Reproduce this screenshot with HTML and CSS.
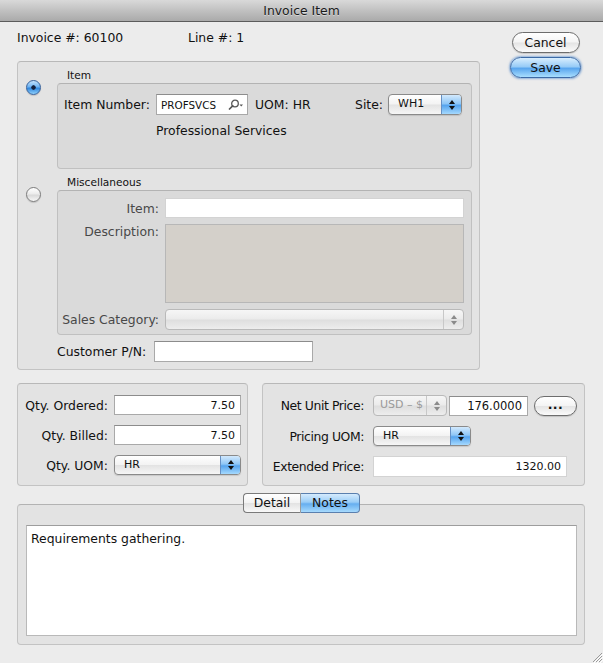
FILE: index.html
```html
<!DOCTYPE html>
<html>
<head>
<meta charset="utf-8">
<title>Invoice Item</title>
<link rel="stylesheet" href="styles.css">
</head>
<body>
<div class="window">
  <div class="titlebar">Invoice Item</div>
  <div class="content">
    <div class="top">
      <div class="left">
        <div class="header">
          <span class="inv">Invoice #: 60100</span>
          <span class="lineno">Line #: 1</span>
        </div>
        <div class="mainbox">
          <div class="section">
            <span class="radio on"></span>
            <div class="group">
              <div class="gtitle">Item</div>
              <div class="gbox itembox">
                <div class="itemrow">
                  <span class="inlbl">Item Number:</span>
                  <span class="search">
                    <span class="stext">PROFSVCS</span>
                    <svg class="sicon" width="16" height="11" viewBox="0 0 16 11">
                      <circle cx="7" cy="4.5" r="3.3" fill="none" stroke="#555" stroke-width="1.3"/>
                      <line x1="4.7" y1="6.9" x2="1.5" y2="10" stroke="#555" stroke-width="1.7" stroke-linecap="round"/>
                      <path d="M11.5 5.5 L15 5.5 L13.25 7.5 Z" fill="#555"/>
                    </svg>
                  </span>
                  <span class="uom">UOM: HR</span>
                  <span class="sitelbl">Site:</span>
                  <span class="popup site"><span class="val">WH1</span><span class="pbtn-arrows"></span></span>
                </div>
                <div class="itemdesc">Professional Services</div>
              </div>
            </div>
          </div>
          <div class="section misc">
            <span class="radio off"></span>
            <div class="group">
              <div class="gtitle">Miscellaneous</div>
              <div class="gbox miscbox">
                <span class="mlbl">Item:</span>
                <span class="field light"></span>
                <span class="mlbl mtop">Description:</span>
                <span class="descarea"></span>
                <span class="mlbl">Sales Category:</span>
                <span class="popup disabled wide"><span class="val"></span><span class="dis-arrows"></span></span>
              </div>
            </div>
          </div>
          <div class="custrow">
            <span class="custlbl">Customer P/N:</span>
            <span class="field cust"></span>
          </div>
        </div>
      </div>
      <div class="buttons">
        <span class="pill cancel">Cancel</span>
        <span class="pill save">Save</span>
      </div>
    </div>

    <div class="lower">
      <div class="box qty">
        <span class="lbl">Qty. Ordered:</span>
        <span class="field num">7.50</span>
        <span class="lbl">Qty. Billed:</span>
        <span class="field num">7.50</span>
        <span class="lbl">Qty. UOM:</span>
        <span class="popup"><span class="val">HR</span><span class="pbtn-arrows"></span></span>
      </div>
      <div class="box price">
        <span class="lbl">Net Unit Price:</span>
        <span class="netrow">
          <span class="popup disabled usd"><span class="val">USD – $</span><span class="dis-arrows"></span></span>
          <span class="field num unit">176.0000</span>
          <span class="pill dots">...</span>
        </span>
        <span class="lbl">Pricing UOM:</span>
        <span class="popup puom"><span class="val">HR</span><span class="pbtn-arrows"></span></span>
        <span class="lbl">Extended Price:</span>
        <span class="field num light ext">1320.00</span>
      </div>
    </div>

    <div class="tabarea">
      <div class="tabs">
        <span class="tab">Detail</span>
        <span class="tab sel">Notes</span>
      </div>
      <div class="tabbox">
        <div class="notes">Requirements gathering.</div>
      </div>
    </div>
  </div>
  <svg class="grip" width="13" height="13" viewBox="0 0 13 13">
    <line x1="12" y1="3" x2="3" y2="12" stroke="#9a9a9a" stroke-width="1"/>
    <line x1="12" y1="6" x2="6" y2="12" stroke="#9a9a9a" stroke-width="1"/>
    <line x1="12" y1="9" x2="9" y2="12" stroke="#9a9a9a" stroke-width="1"/>
    <line x1="13" y1="4" x2="4" y2="13" stroke="#ffffff" stroke-width="1"/>
    <line x1="13" y1="7" x2="7" y2="13" stroke="#ffffff" stroke-width="1"/>
    <line x1="13" y1="10" x2="10" y2="13" stroke="#ffffff" stroke-width="1"/>
  </svg>
</div>
</body>
</html>
```

FILE: styles.css
```css
* { box-sizing: border-box; }
html, body { margin: 0; padding: 0; }
body {
  width: 603px;
  height: 663px;
  background: #ececec;
  font-family: "DejaVu Sans", "Noto Sans", sans-serif;
  font-size: 12.4px;
  color: #111;
  overflow: hidden;
}
.window {
  position: relative;
  width: 603px;
  height: 663px;
  background: #ececec;
}
.titlebar {
  height: 22px;
  line-height: 21px;
  text-align: center;
  background: linear-gradient(#d9d9d9, #bcbcbc 60%, #aaaaaa);
  border-bottom: 1px solid #5c5c5c;
  color: #1a1a1a;
  text-shadow: 0 1px 0 rgba(255,255,255,0.45);
}
.content {
  padding: 0 18px 0 17px;
}
.top {
  display: flex;
}
.left {
  width: 463px;
}
.header {
  padding-top: 9px;
  height: 23px;
  line-height: 14px;
  margin-bottom: 16px;
  display: flex;
}
.inv { width: 171px; }

.mainbox {
  background: #e3e3e3;
  border: 1px solid #c3c3c3;
  border-top-color: #b8b8b8;
  border-radius: 4px;
  padding: 6px 7px 7px 8px;
}
.section {
  display: flex;
  align-items: flex-start;
}
.section.misc { margin-top: 6px; }
.radio {
  width: 15px;
  height: 15px;
  border-radius: 50%;
  margin-top: 12px;
  margin-right: 16px;
  flex: none;
  box-shadow: 0 1px 1px rgba(0,0,0,0.15);
}
.radio.on {
  border: 1px solid #35609b;
  background:
    radial-gradient(circle, #14213d 0 1.9px, transparent 2.5px),
    linear-gradient(#c3e2fc, #6db2f1 45%, #2f86dd 55%, #8fd0fb);
}
.radio.off {
  border: 1px solid #7c7c7c;
  background: linear-gradient(#ffffff, #ececec 45%, #d9d9d9 55%, #f7f7f7);
}
.group { flex: 1; }
.gtitle {
  font-size: 10.6px;
  line-height: 14px;
  height: 14px;
  padding-left: 10px;
  margin-bottom: 1px;
}
.gbox {
  background: #dadada;
  border: 1px solid #c0c0c0;
  border-top-color: #b3b3b3;
  border-radius: 4px;
}
.itembox {
  height: 86px;
  padding: 10px 9px 0 6px;
}
.itemrow {
  display: flex;
  align-items: center;
  height: 21px;
}
.inlbl { width: 92px; white-space: nowrap; }
.search {
  width: 92px;
  height: 21px;
  display: flex;
  align-items: center;
  background: #fff;
  border: 1px solid #a8a8a8;
  border-top-color: #8d8d8d;
  padding-left: 4px;
  font-size: 10.4px;
}
.stext { flex: 1; }
.sicon { margin-right: 3px; }
.uom { margin-left: 7px; }
.sitelbl { margin-left: auto; margin-right: 5px; }
.itemdesc {
  margin-top: 9px;
  margin-left: 92px;
  line-height: 13px;
}

.popup {
  display: flex;
  align-items: stretch;
  height: 20px;
  border: 1px solid #8a8a8a;
  border-radius: 4px;
  background: linear-gradient(#ffffff, #f3f3f3 48%, #e3e3e3 52%, #f6f6f6);
  box-shadow: 0 1px 1px rgba(0,0,0,0.12);
  font-size: 11px;
  overflow: hidden;
}
.popup .val {
  flex: 1;
  padding-left: 9px;
  line-height: 18px;
  white-space: nowrap;
}
.pbtn-arrows {
  width: 20px;
  background: linear-gradient(#d2e9fd, #8ec6f6 45%, #56a4ee 55%, #a5d9fe);
  border-left: 1px solid #6690c4;
  display: flex;
  flex-direction: column;
  align-items: center;
  justify-content: center;
  gap: 2px;
}
.pbtn-arrows::before {
  content: "";
  border-left: 3px solid transparent;
  border-right: 3px solid transparent;
  border-bottom: 4px solid #111;
}
.pbtn-arrows::after {
  content: "";
  border-left: 3px solid transparent;
  border-right: 3px solid transparent;
  border-top: 4px solid #111;
}
.popup.site { width: 74px; height: 21px; }
.popup.disabled {
  border-color: #b9b9b9;
  background: linear-gradient(#f6f6f6, #ebebeb 48%, #dedede 52%, #ededed);
  box-shadow: none;
  color: #9a9a9a;
}
.dis-arrows {
  width: 20px;
  border-left: 1px solid #c8c8c8;
  display: flex;
  flex-direction: column;
  align-items: center;
  justify-content: center;
  gap: 2px;
}
.dis-arrows::before {
  content: "";
  border-left: 3px solid transparent;
  border-right: 3px solid transparent;
  border-bottom: 4px solid #8a8a8a;
}
.dis-arrows::after {
  content: "";
  border-left: 3px solid transparent;
  border-right: 3px solid transparent;
  border-top: 4px solid #8a8a8a;
}
.popup.wide { height: 21px; }

.miscbox {
  display: grid;
  grid-template-columns: 101px 299px;
  column-gap: 6px;
  grid-template-rows: 20px 79px 21px;
  row-gap: 6px;
  padding: 7px 7px 4px 0;
  align-items: center;
}
.miscbox .descarea { margin-bottom: 1px; }
.mlbl {
  justify-self: end;
  text-align: right;
  color: #484848;
  white-space: nowrap;
}
.mlbl.mtop { align-self: start; line-height: 16px; }

.field {
  display: flex;
  align-items: center;
  height: 20px;
  background: #fff;
  border: 1px solid #a9a9a9;
  border-top-color: #8c8c8c;
  font-size: 11px;
  padding: 0 5px;
}
.field.light {
  border-color: #d3d3d3;
}
.field.num { justify-content: flex-end; }
.descarea {
  display: block;
  height: 79px;
  background: #d4d0ca;
  border: 1px solid #b7b7b7;
}
.custrow {
  display: flex;
  align-items: center;
  margin-top: 6px;
  margin-left: 31px;
}
.custlbl { width: 97px; white-space: nowrap; }
.field.cust { width: 159px; height: 21px; }

.buttons {
  margin-left: 30px;
  padding-top: 10px;
  width: 71px;
  display: flex;
  flex-direction: column;
  align-items: center;
  gap: 4px;
}
.pill {
  display: block;
  height: 21px;
  border-radius: 11px;
  border: 1px solid #6d6d6d;
  background: linear-gradient(#ffffff, #f4f4f4 48%, #e4e4e4 52%, #fbfbfb);
  text-align: center;
  line-height: 19px;
  box-shadow: 0 1px 1px rgba(0,0,0,0.15);
}
.pill.cancel { width: 68px; }
.pill.save {
  width: 71px;
  border-color: #3c6aa6;
  background: linear-gradient(#d9eefe, #98ccf7 45%, #5aa6ee 55%, #a8defe);
  box-shadow: 0 0 2px 1px rgba(70,130,200,0.55);
}

.lower {
  display: flex;
  gap: 14px;
  margin-top: 13px;
}
.box {
  background: #e3e3e3;
  border: 1px solid #c3c3c3;
  border-top-color: #b8b8b8;
  border-radius: 4px;
  display: grid;
  align-items: center;
}
.lbl {
  text-align: right;
  white-space: nowrap;
}
.box.qty {
  width: 231px;
  height: 103px;
  grid-template-columns: 90px 127px;
  grid-template-rows: 20px 20px 20px;
  column-gap: 6px;
  row-gap: 10px;
  padding: 11px 6px 10px 0;
}
.box.price {
  width: 323px;
  height: 103px;
  grid-template-columns: 95px 204px;
  grid-template-rows: 21px 20px 21px;
  column-gap: 9px;
  row-gap: 10px;
  padding: 11px 7px 9px 6px;
}
.price .lbl { letter-spacing: -0.4px; justify-self: end; }
.netrow {
  display: flex;
  align-items: center;
}
.popup.usd { width: 74px; height: 21px; }
.popup.usd .val { padding-left: 6px; }
.field.unit { width: 79px; margin-left: 2px; font-size: 11.5px; }
.pill.dots {
  width: 43px;
  height: 20px;
  margin-left: 6px;
  line-height: 15px;
  border-radius: 10px;
  font-size: 12.5px;
  font-weight: bold;
  letter-spacing: 0.5px;
}
.popup.puom { width: 98px; }
.field.ext { width: 194px; height: 21px; }

.tabarea {
  margin-top: 7px;
}
.tabs {
  display: flex;
  justify-content: center;
  position: relative;
  z-index: 1;
  padding-left: 1px;
}
.tab {
  height: 20px;
  line-height: 18px;
  border: 1px solid #7a7a7a;
  background: linear-gradient(#ffffff, #f3f3f3 48%, #e3e3e3 52%, #f8f8f8);
  text-align: center;
}
.tab:first-child {
  width: 58px;
  border-radius: 4px 0 0 4px;
  border-right-color: #9a9a9a;
}
.tab.sel {
  width: 59px;
  border-left: none;
  border-radius: 0 4px 4px 0;
  border-color: #5a7fae;
  background: linear-gradient(#d5ebfd, #9acdf7 45%, #66aef0 55%, #a6dafd);
}
.tabbox {
  margin-top: -9px;
  height: 141px;
  background: #e3e3e3;
  border: 1px solid #c3c3c3;
  border-top-color: #b3b3b3;
  border-radius: 4px;
  padding: 20px 7px 8px 8px;
}
.notes {
  height: 111px;
  background: #fff;
  border: 1px solid #b9b9b9;
  border-top-color: #9d9d9d;
  padding: 5px 4px;
  line-height: 16px;
}
.grip {
  position: absolute;
  right: 0;
  bottom: 0;
}
```
